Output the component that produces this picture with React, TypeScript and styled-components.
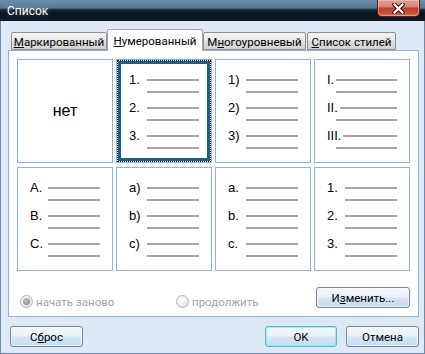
import styled, { createGlobalStyle } from "styled-components";

const GlobalStyle = createGlobalStyle`
  html, body {
    margin: 0;
    padding: 0;
  }
  body {
    background: #dfe9f5;
    font-family: Roboto, "Noto Sans", sans-serif;
  }
`;

type ListStyle = {
  markers?: string[];
  roman?: boolean;
  selected?: boolean;
};

const styles: ListStyle[] = [
  {},
  { markers: ["1.", "2.", "3."], selected: true },
  { markers: ["1)", "2)", "3)"] },
  { markers: ["I.", "II.", "III."], roman: true },
  { markers: ["A.", "B.", "C."] },
  { markers: ["a)", "b)", "c)"] },
  { markers: ["a.", "b.", "c."] },
  { markers: ["1.", "2.", "3."] },
];

function CloseIcon() {
  return (
    <svg width="13" height="11" viewBox="0 0 13 11">
      <path d="M2.5 1.5 L10.5 9.5 M10.5 1.5 L2.5 9.5" stroke="#3a0d08" strokeWidth="4.2" strokeLinecap="square" />
      <path d="M2.5 1.5 L10.5 9.5 M10.5 1.5 L2.5 9.5" stroke="#ffffff" strokeWidth="2.2" strokeLinecap="square" />
    </svg>
  );
}

function StyleCell({ style }: { style: ListStyle }) {
  if (!style.markers) {
    return (
      <Cell>
        <NoneLabel>нет</NoneLabel>
      </Cell>
    );
  }
  return (
    <Cell $selected={style.selected}>
      {style.markers.map((m) => (
        <Item key={m}>
          <ItemRow>
            <Marker $roman={style.roman}>{m}</Marker>
            <Line />
          </ItemRow>
          <ItemRow $indent={style.roman ? 9 : 18}>
            <Line />
          </ItemRow>
        </Item>
      ))}
    </Cell>
  );
}

export default function App() {
  return (
    <>
      <GlobalStyle />
      <Window>
        <TitleBar>
          <Title>Список</Title>
          <CloseButton>
            <CloseIcon />
          </CloseButton>
        </TitleBar>
        <Content>
          <TabStrip>
            <Tab $width={96}>
              <U>М</U>аркированный
            </Tab>
            <Tab $width={96} $active>
              <U>Н</U>умерованный
            </Tab>
            <Tab $width={103}>
              М<U>н</U>огоуровневый
            </Tab>
            <Tab $width={89} $gap={1}>
              <U>С</U>писок стилей
            </Tab>
          </TabStrip>
          <Panel>
            <Grid>
              {styles.map((s, i) => (
                <StyleCell key={i} style={s} />
              ))}
            </Grid>
            <Options>
              <Radio $width={156}>
                <RadioCircle $checked />
                начать заново
              </Radio>
              <Radio>
                <RadioCircle />
                продолжить
              </Radio>
              <Button $width={94} $push>
                И<U>з</U>менить...
              </Button>
            </Options>
          </Panel>
          <Footer>
            <Button $width={73}>
              С<U>б</U>рос
            </Button>
            <Button $width={72} $push $default>
              OK
            </Button>
            <Button $width={73}>Отмена</Button>
          </Footer>
        </Content>
      </Window>
    </>
  );
}

const Window = styled.div`
  width: 425px;
  height: 354px;
  box-sizing: border-box;
  display: flex;
  flex-direction: column;
  background: #dfe9f5;
  box-shadow: inset 1px 0 #6d8aa8, inset -1px 0 #6d8aa8, inset 0 -1px #6d8aa8;
`;

const TitleBar = styled.div`
  height: 21px;
  flex-shrink: 0;
  display: flex;
  justify-content: space-between;
  align-items: flex-start;
  padding-left: 7px;
  background: linear-gradient(
    to bottom,
    #6d8fad 0%,
    #557895 38%,
    #1a2c3b 46%,
    #08131c 62%,
    #0d1c28 100%
  );
`;

const Title = styled.span`
  color: #ffffff;
  font-size: 12px;
  line-height: 22px;
  text-shadow: 0 0 6px rgba(255, 255, 255, 0.35);
`;

const CloseButton = styled.div`
  width: 43px;
  height: 17px;
  margin-right: 5px;
  box-sizing: border-box;
  display: flex;
  align-items: center;
  justify-content: center;
  border: 1px solid #5e1d14;
  border-top: none;
  border-radius: 0 0 5px 5px;
  background: linear-gradient(
    to bottom,
    #dfa095 0%,
    #d3877a 42%,
    #c0432f 50%,
    #c54a32 75%,
    #d9714f 100%
  );
  box-shadow: inset 0 0 0 1px rgba(255, 210, 200, 0.45);
`;

const Content = styled.div`
  display: flex;
  flex-direction: column;
  padding: 8px 6px 0 8px;
`;

const TabStrip = styled.div`
  height: 22px;
  display: flex;
  align-items: flex-end;
  padding-left: 3px;
  margin-bottom: -1px;
  position: relative;
  z-index: 1;
`;

const Tab = styled.div<{ $width: number; $active?: boolean; $gap?: number }>`
  width: ${(p) => p.$width}px;
  height: ${(p) => (p.$active ? 22 : 18)}px;
  margin-left: ${(p) => p.$gap ?? 0}px;
  margin-bottom: ${(p) => (p.$active ? 0 : 1)}px;
  box-sizing: border-box;
  display: flex;
  align-items: center;
  justify-content: center;
  font-size: 11.5px;
  color: #000;
  white-space: nowrap;
  border: 1px solid ${(p) => (p.$active ? "#9aa6b3" : "#8e9096")};
  border-bottom: ${(p) => (p.$active ? "none" : "1px solid #8e9096")};
  border-radius: 2px 2px 0 0;
  background: ${(p) =>
    p.$active
      ? "#ffffff"
      : "linear-gradient(to bottom, #f4f4f4 0%, #ebebeb 45%, #dedede 50%, #d3d3d3 100%)"};
  padding-top: ${(p) => (p.$active ? 0 : 1)}px;
`;

const U = styled.span`
  text-decoration: underline;
`;

const Panel = styled.div`
  border: 1px solid #89b6da;
  background: #ffffff;
  padding: 8px 8px 8px 8px;
  display: flex;
  flex-direction: column;
`;

const Grid = styled.div`
  display: grid;
  grid-template-columns: repeat(4, 96px);
  grid-template-rows: repeat(2, 104px);
  column-gap: 3px;
  row-gap: 4px;
`;

const Cell = styled.div<{ $selected?: boolean }>`
  position: relative;
  box-sizing: border-box;
  border: 1px solid #86b8dd;
  padding: 14px 12px 0 12px;
  display: flex;
  flex-direction: column;
  justify-content: flex-start;
  font-family: "Liberation Sans", Arial, sans-serif;

  &::before {
    content: "";
    display: ${(p) => (p.$selected ? "block" : "none")};
    position: absolute;
    inset: 0;
    border: 1px dotted #000;
    box-shadow: inset 0 0 0 3px #1b5e8c;
    pointer-events: none;
  }
`;

const NoneLabel = styled.div`
  flex: 1;
  margin-top: -14px;
  display: flex;
  align-items: center;
  justify-content: center;
  font-size: 16px;
  color: #000;
`;

const Item = styled.div`
  margin-bottom: 4px;
`;

const ItemRow = styled.div<{ $indent?: number }>`
  height: 12px;
  display: flex;
  align-items: center;
  padding-left: ${(p) => p.$indent ?? 0}px;
`;

const Marker = styled.span<{ $roman?: boolean }>`
  width: ${(p) => (p.$roman ? "auto" : "18px")};
  margin-right: ${(p) => (p.$roman ? 2 : 0)}px;
  flex-shrink: 0;
  font-size: 13px;
  line-height: 12px;
  color: #000;
`;

const Line = styled.div`
  flex: 1;
  height: 2px;
  background: #a6a6a6;
`;

const Options = styled.div`
  margin-top: 16px;
  height: 21px;
  display: flex;
  align-items: flex-end;
  padding-left: 3px;
`;

const Radio = styled.label<{ $width?: number }>`
  width: ${(p) => (p.$width ? `${p.$width}px` : "auto")};
  height: 13px;
  display: flex;
  align-items: center;
  gap: 3px;
  font-size: 11.5px;
  color: #a3a3a3;
`;

const RadioCircle = styled.span<{ $checked?: boolean }>`
  width: 13px;
  height: 13px;
  box-sizing: border-box;
  border-radius: 50%;
  border: 1px solid #b5b5b5;
  background: radial-gradient(circle at 35% 30%, #ffffff 0%, #ececec 55%, #dcdcdc 100%);
  display: flex;
  align-items: center;
  justify-content: center;
  flex-shrink: 0;

  &::after {
    content: "";
    display: ${(p) => (p.$checked ? "block" : "none")};
    width: 7px;
    height: 7px;
    border-radius: 50%;
    background: radial-gradient(circle at 40% 35%, #c4c4c4 0%, #959595 70%, #8a8a8a 100%);
  }
`;

const Button = styled.div<{ $width: number; $push?: boolean; $default?: boolean }>`
  width: ${(p) => p.$width}px;
  height: 21px;
  margin-left: ${(p) => (p.$push ? "auto" : "0")};
  box-sizing: border-box;
  display: flex;
  align-items: center;
  justify-content: center;
  font-size: 11.5px;
  color: #000;
  border: 1px solid ${(p) => (p.$default ? "#3cc3cf" : "#72869b")};
  border-radius: 3px;
  background: linear-gradient(
    to bottom,
    #f5f8fc 0%,
    #e9f1f9 48%,
    #d6e6f5 52%,
    #c4dcf0 100%
  );
  box-shadow: inset 0 0 0 1px ${(p) => (p.$default ? "rgba(140, 230, 240, 0.7)" : "rgba(255, 255, 255, 0.6)")};
`;

const Footer = styled.div`
  display: flex;
  gap: 9px;
  margin-top: 9px;
  padding-left: 2px;
`;
